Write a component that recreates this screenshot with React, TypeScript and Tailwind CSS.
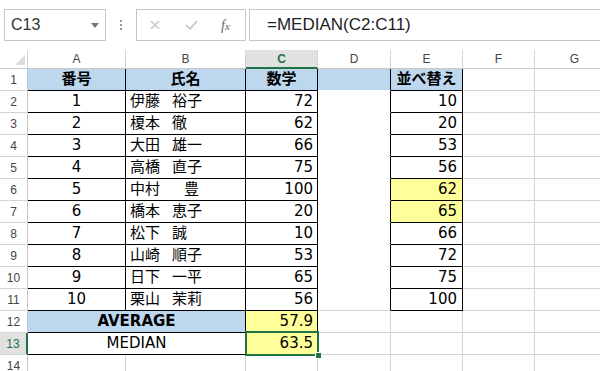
import React from 'react';

type Side = 'g' | 'k' | 'w' | 'n';

const rightBorder: Record<Side, string> = {
  g: 'border-r border-r-[#d4d4d4]',
  k: 'border-r border-r-black',
  w: 'border-r border-r-white',
  n: '',
};

const bottomBorder: Record<Side, string> = {
  g: 'border-b border-b-[#d4d4d4]',
  k: 'border-b border-b-black',
  w: 'border-b border-b-white',
  n: '',
};

type CellProps = {
  w: string;
  r?: Side;
  b?: Side;
  className?: string;
  children?: React.ReactNode;
};

function Cell({ w, r = 'g', b = 'g', className = '', children }: CellProps) {
  return (
    <div
      className={`box-border flex h-full shrink-0 items-center overflow-visible whitespace-nowrap ${w} ${rightBorder[r]} ${bottomBorder[b]} ${className}`}
    >
      {children}
    </div>
  );
}

function RowHead({ n, selected = false }: { n: number; selected?: boolean }) {
  return selected ? (
    <div className="box-border flex h-full w-[28px] shrink-0 items-center justify-center border-r-2 border-b border-r-[#217346] border-b-[#d4d4d4] bg-[#e1e1e1] font-['Liberation_Sans',sans-serif] text-[12px] text-[#217346]">
      {n}
    </div>
  ) : (
    <div className="box-border flex h-full w-[28px] shrink-0 items-center justify-center border-r border-b border-r-[#c8c8c8] border-b-[#d4d4d4] font-['Liberation_Sans',sans-serif] text-[12px] text-[#444]">
      {n}
    </div>
  );
}

// full-width spaces in the names are a bit narrower in the sheet font
function Name({ text }: { text: string }) {
  return (
    <>
      {text.split('').map((ch, i) =>
        ch === '　' ? (
          <span key={i} className="text-[12px]">
            {ch}
          </span>
        ) : (
          <span key={i}>{ch}</span>
        ),
      )}
    </>
  );
}

const data = [
  { no: 1, name: '伊藤　裕子', math: 72, sorted: 10 },
  { no: 2, name: '榎本　徹', math: 62, sorted: 20 },
  { no: 3, name: '大田　雄一', math: 66, sorted: 53 },
  { no: 4, name: '高橋　直子', math: 75, sorted: 56 },
  { no: 5, name: '中村　　豊', math: 100, sorted: 62, mark: true },
  { no: 6, name: '橋本　恵子', math: 20, sorted: 65, mark: true },
  { no: 7, name: '松下　誠', math: 10, sorted: 66 },
  { no: 8, name: '山崎　順子', math: 53, sorted: 72 },
  { no: 9, name: '日下　一平', math: 65, sorted: 75 },
  { no: 10, name: '栗山　茉莉', math: 56, sorted: 100 },
];

const letters = ['A', 'B', 'C', 'D', 'E', 'F', 'G'];
const widths = ['w-[98px]', 'w-[120px]', 'w-[72px]', 'w-[73px]', 'w-[72px]', 'w-[72px]', 'w-[80px]'];

function TopBar() {
  return (
    <div className="flex h-[50px] items-start pl-[4px] pt-[9px] font-['Liberation_Sans',sans-serif]">
      <div className="box-border flex h-[32px] w-[102px] shrink-0 items-center justify-between border border-[#c6c6c6] px-[6px]">
        <span className="text-[16px] text-[#333]">C13</span>
        <svg width="8" height="5" viewBox="0 0 8 5">
          <path d="M0 0h8L4 5z" fill="#777" />
        </svg>
      </div>
      <div className="flex h-[32px] w-[30px] shrink-0 flex-col items-center justify-center gap-[2px]">
        <div className="h-[2px] w-[2px] bg-[#9a9a9a]" />
        <div className="h-[2px] w-[2px] bg-[#9a9a9a]" />
        <div className="h-[2px] w-[2px] bg-[#9a9a9a]" />
      </div>
      <div className="box-border flex h-[32px] w-[110px] shrink-0 items-center border border-[#c6c6c6]">
        <svg className="ml-[13px]" width="10" height="10" viewBox="0 0 10 10">
          <path d="M1 1l8 8M9 1l-8 8" stroke="#c4c4c4" strokeWidth="1.4" />
        </svg>
        <svg className="ml-[25px]" width="13" height="10" viewBox="0 0 13 10">
          <path d="M1 5l4 4 7-8" stroke="#c4c4c4" strokeWidth="1.6" fill="none" />
        </svg>
        <span className="ml-[23px] font-['Liberation_Serif',serif] text-[14px] italic text-[#666]">
          f<span className="text-[11px]">x</span>
        </span>
      </div>
      <div className="ml-[3px] box-border flex h-[32px] flex-1 items-center border border-r-0 border-[#c6c6c6] pl-[17px] text-[17px] text-[#222]">
        =MEDIAN(C2:C11)
      </div>
    </div>
  );
}

function HeaderRow() {
  return (
    <div className="flex h-[19px]">
      <div className="relative box-border h-full w-[28px] shrink-0 border-r border-b border-r-[#d4d4d4] border-b-[#c8c8c8]">
        <svg className="absolute left-[15px] top-[5px]" width="10" height="10" viewBox="0 0 10 10">
          <path d="M10 0V10H0z" fill="#dcdcdc" />
        </svg>
      </div>
      {letters.map((l, i) =>
        l === 'C' ? (
          <div
            key={l}
            className={`box-border flex h-full shrink-0 items-center justify-center border-r border-b-2 border-r-[#d4d4d4] border-b-[#217346] bg-[#e1e1e1] font-['Liberation_Sans',sans-serif] text-[12px] font-bold text-[#217346] ${widths[i]}`}
          >
            {l}
          </div>
        ) : (
          <div
            key={l}
            className={`box-border flex h-full shrink-0 items-center justify-center border-r border-b border-r-[#d4d4d4] border-b-[#c8c8c8] font-['Liberation_Sans',sans-serif] text-[12px] text-[#444] ${widths[i]}`}
          >
            {l}
          </div>
        ),
      )}
    </div>
  );
}

export default function App() {
  return (
    <div className="h-[371px] w-[600px] overflow-hidden bg-white">
      <TopBar />
      <HeaderRow />
      <div className="font-['DejaVu_Sans','Noto_Sans_CJK_JP',sans-serif] text-[15px] text-black">
        <div className="flex h-[22px]">
          <RowHead n={1} />
          <Cell w="w-[98px]" r="k" b="k" className="justify-center bg-[#bdd7ee] font-bold">番号</Cell>
          <Cell w="w-[120px]" r="k" b="k" className="justify-center bg-[#bdd7ee] font-bold">氏名</Cell>
          <Cell w="w-[72px]" r="k" b="k" className="justify-center bg-[#bdd7ee] font-bold">数学</Cell>
          <Cell w="w-[73px]" r="k" b="w" className="bg-[#bdd7ee]" />
          <Cell w="w-[72px]" r="k" b="k" className="justify-center bg-[#bdd7ee] font-bold">並べ替え</Cell>
          <Cell w="w-[72px]" />
          <Cell w="w-[80px]" />
        </div>
        {data.map((d, i) => (
          <div key={d.no} className="flex h-[22px]">
            <RowHead n={i + 2} />
            <Cell w="w-[98px]" r="k" b="k" className="justify-center">{d.no}</Cell>
            <Cell w="w-[120px]" r="k" b="k" className="pl-1">
              <Name text={d.name} />
            </Cell>
            <Cell w="w-[72px]" r="k" b="k" className="justify-end pr-1">{d.math}</Cell>
            <Cell w="w-[73px]" r="k" b={i === data.length - 1 ? 'g' : 'w'} />
            <Cell
              w="w-[72px]"
              r="k"
              b="k"
              className={`justify-end pr-[5px] ${d.mark ? 'bg-[#ffff99]' : ''}`}
            >
              {d.sorted}
            </Cell>
            <Cell w="w-[72px]" />
            <Cell w="w-[80px]" />
          </div>
        ))}
        <div className="flex h-[22px]">
          <RowHead n={12} />
          <Cell w="w-[218px]" r="k" b="k" className="justify-center bg-[#bdd7ee] font-bold">AVERAGE</Cell>
          <Cell w="w-[72px]" r="k" b="k" className="justify-end bg-[#ffff99] pr-1">57.9</Cell>
          <Cell w="w-[73px]" />
          <Cell w="w-[72px]" />
          <Cell w="w-[72px]" />
          <Cell w="w-[80px]" />
        </div>
        <div className="flex h-[22px]">
          <RowHead n={13} selected />
          <Cell w="w-[218px]" r="k" b="k" className="justify-center">MEDIAN</Cell>
          <Cell w="w-[72px]" r="k" b="k" className="relative justify-end bg-[#ffff99] pr-1">
            63.5
            <div className="absolute bottom-[-2px] left-[-1px] right-[-2px] top-[-2px] z-10 border-2 border-[#217346]" />
            <div className="absolute bottom-[-5px] right-[-5px] z-20 h-[7px] w-[7px] border border-white bg-[#217346]" />
          </Cell>
          <Cell w="w-[73px]" />
          <Cell w="w-[72px]" />
          <Cell w="w-[72px]" />
          <Cell w="w-[80px]" />
        </div>
        <div className="flex h-[22px]">
          <RowHead n={14} />
          <Cell w="w-[98px]" />
          <Cell w="w-[120px]" />
          <Cell w="w-[72px]" />
          <Cell w="w-[73px]" />
          <Cell w="w-[72px]" />
          <Cell w="w-[72px]" />
          <Cell w="w-[80px]" />
        </div>
      </div>
    </div>
  );
}
